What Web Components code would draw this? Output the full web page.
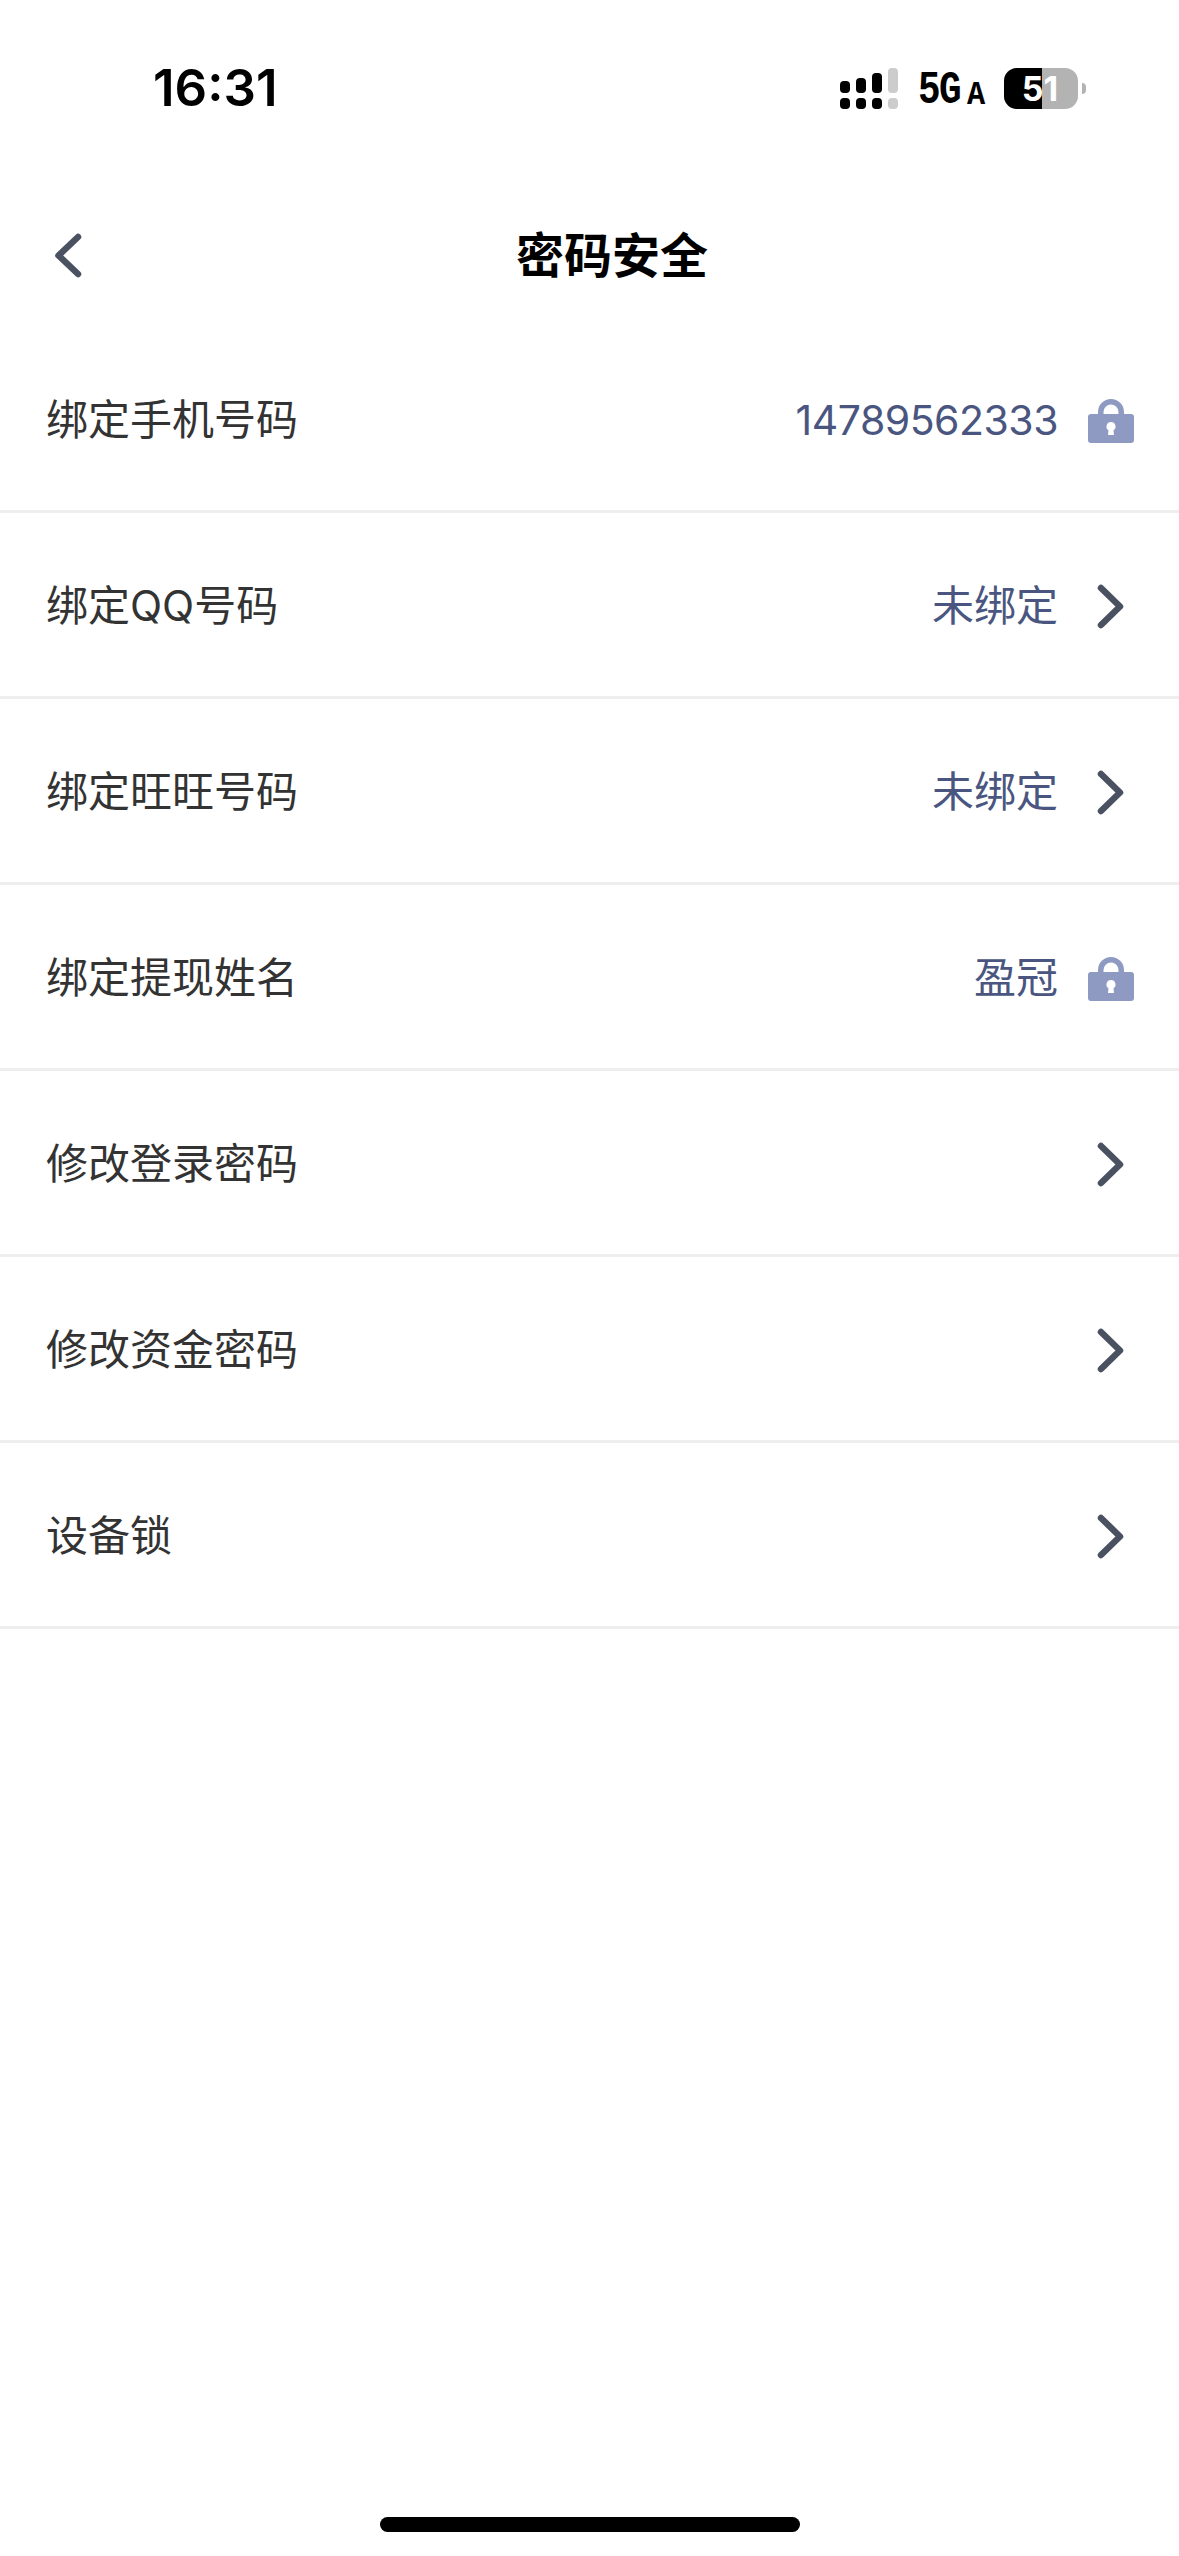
<!DOCTYPE html>
<html lang="zh">
<head>
<meta charset="utf-8">
<title>密码安全</title>
<style>
html, body { margin: 0; padding: 0; background: #fff; }
body { font-family: Inter, "Noto Sans CJK SC", sans-serif; }
</style>
</head>
<body>
<app-page>
    <status-bar time="16:31" battery="51"></status-bar>
    <nav-header title="密码安全"></nav-header>
    <setting-row label="绑定手机号码" value="14789562333" digits icon="lock"></setting-row>
    <setting-row label="绑定QQ号码" value="未绑定" icon="chevron"></setting-row>
    <setting-row label="绑定旺旺号码" value="未绑定" icon="chevron"></setting-row>
    <setting-row label="绑定提现姓名" value="盈冠" icon="lock"></setting-row>
    <setting-row label="修改登录密码" icon="chevron"></setting-row>
    <setting-row label="修改资金密码" icon="chevron"></setting-row>
    <setting-row label="设备锁" icon="chevron"></setting-row>
</app-page>
<script>
class AppPage extends HTMLElement {
    constructor() {
        super()
        this.root = this.attachShadow({ mode: "open" })
        this.root.innerHTML = `
            <style>
            :host { display: flex; flex-direction: column; height: 2556px; background: #fff; overflow: hidden; }
            .home { margin-top: auto; margin-bottom: 24px; align-self: center; width: 420px; height: 15px; border-radius: 8px; background: #000; }
            </style>
            <slot></slot>
            <div class="home"></div>
        `
    }
}

class StatusBar extends HTMLElement {
    constructor() {
        super()
        this.root = this.attachShadow({ mode: "open" })
        this.root.innerHTML = `
            <style>
            :host { display: flex; align-items: center; height: 176px; padding: 0 93px 0 153px; box-sizing: border-box; }
            .time { font: 600 51px/1 Inter, sans-serif; color: #000; flex: 1; margin-top: -2px; }
            .signal { display: block; margin-right: 20px; }
            .net { display: flex; align-items: flex-end; width: 67px; height: 32px; margin: 5px 19px 0 0; color: #000; font-family: "Liberation Mono", monospace; font-weight: 700; }
            .net span { display: block; flex: none; transform-origin: left bottom; white-space: nowrap; }
            .big { width: 49px; font-size: 47px; line-height: 32px; letter-spacing: -2px; transform: scaleX(.8); }
            .small { width: 18px; font-size: 33px; line-height: 23px; transform: scaleX(.92); }
            .battery { position: relative; display: flex; width: 74px; height: 41px; border-radius: 13px; overflow: hidden; background: #b3b3b3; }
            .battery i { display: block; width: 38px; background: #000; }
            .battery b { position: absolute; inset: 0; left: -2px; text-align: center; font: 700 34px/41px Inter, sans-serif; color: #fff; }
            .nub { width: 4px; height: 11px; margin-left: 4px; background: #b3b3b3; border-radius: 0 6px 6px 0; }
            </style>
            <span class="time"></span>
            <svg class="signal" width="58" height="41" viewBox="0 0 58 41">
                <rect x="0" y="13" width="10" height="12" rx="4" />
                <rect x="16" y="10" width="10" height="15" rx="4" />
                <rect x="32" y="5" width="10" height="20" rx="4" />
                <rect x="48" y="0" width="10" height="25" rx="4" fill="#ccc" />
                <rect x="0" y="30" width="10" height="11" rx="4" />
                <rect x="16" y="30" width="10" height="11" rx="4" />
                <rect x="32" y="30" width="10" height="11" rx="4" />
                <rect x="48" y="30" width="10" height="11" rx="4" fill="#ccc" />
            </svg>
            <div class="net"><span class="big">5G</span><span class="small">A</span></div>
            <div class="battery"><i></i><b></b></div>
            <div class="nub"></div>
        `
        this.root.querySelector(".time").textContent = this.getAttribute("time")
        this.root.querySelector("b").textContent = this.getAttribute("battery")
    }
}

class NavHeader extends HTMLElement {
    constructor() {
        super()
        this.root = this.attachShadow({ mode: "open" })
        this.root.innerHTML = `
            <style>
            :host { display: flex; align-items: center; height: 151px; padding: 0 38px 0 52px; box-sizing: border-box; }
            svg { display: block; flex: none; margin-top: 8px; }
            .title { flex: 1; text-align: center; font: 700 48px/1 "Noto Sans CJK SC", sans-serif; color: #000; }
            </style>
            <svg width="31" height="47" viewBox="0 0 31 47" fill="none" stroke="#4a5160" stroke-width="6.5" stroke-linecap="round" stroke-linejoin="round">
                <path d="M26 5 L6.5 23.5 L26 42" />
            </svg>
            <div class="title"></div>
        `
        this.root.querySelector(".title").textContent = this.getAttribute("title")
    }
}

class SettingRow extends HTMLElement {
    constructor() {
        super()
        this.root = this.attachShadow({ mode: "open" })
        const lock = `
            <svg width="46" height="46" viewBox="0 0 46 46">
                <path d="M10 20 V15 A13 13 0 0 1 36 15 V20 H30.5 V15 A7.5 7.5 0 0 0 15.5 15 V20 Z" fill="#8e9ac2" />
                <path d="M3 17 H43 A3 3 0 0 1 46 20 V43 A3 3 0 0 1 43 46 H3 A3 3 0 0 1 0 43 V20 A3 3 0 0 1 3 17 Z M23 25 A4.6 4.6 0 0 0 20.5 33.4 L20 38 H26 L25.5 33.4 A4.6 4.6 0 0 0 23 25 Z" fill="#8e9ac2" fill-rule="evenodd" />
            </svg>`
        const chevron = `
            <svg width="30" height="47" viewBox="0 0 30 47" fill="none" stroke="#4a5160" stroke-width="6.5" stroke-linecap="round" stroke-linejoin="round">
                <path d="M5 5 L24 23.5 L5 42" />
            </svg>`
        this.root.innerHTML = `
            <style>
            :host { display: flex; align-items: center; height: 186px; padding: 3px 45px 0 46px; box-sizing: border-box; border-bottom: 3px solid #eee; font: 400 42px/1 Inter, "Noto Sans CJK SC", sans-serif; }
            .label { flex: 1; color: #333; }
            .value { color: #4a5680; margin-right: 30px; }
            :host([digits]) .value { font-size: 41px; letter-spacing: -.5px; }
            .icon { width: 46px; display: flex; justify-content: center; }
            svg { display: block; }
            </style>
            <span class="label"></span>
            <span class="value"></span>
            <span class="icon">${this.getAttribute("icon") === "lock" ? lock : chevron}</span>
        `
        this.root.querySelector(".label").textContent = this.getAttribute("label")
        this.root.querySelector(".value").textContent = this.getAttribute("value") || ""
    }
}

window.customElements.define("app-page", AppPage)
window.customElements.define("status-bar", StatusBar)
window.customElements.define("nav-header", NavHeader)
window.customElements.define("setting-row", SettingRow)
</script>
</body>
</html>
